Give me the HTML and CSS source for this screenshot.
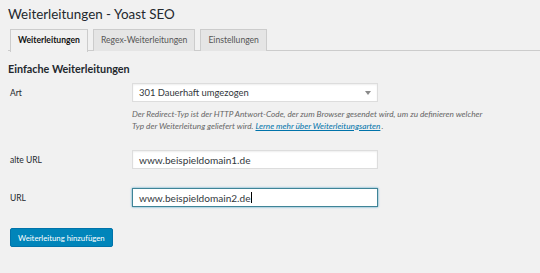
FILE: index.html
```html
<!DOCTYPE html>
<html lang="de">
<head>
  <meta charset="UTF-8" />
  <title>Weiterleitungen - Yoast SEO</title>
  <link rel="stylesheet" href="styles.css">
</head>
<body>
  <div class="wrap">
    <h1>Weiterleitungen - Yoast SEO</h1>

    <nav class="tab-wrapper">
      <a class="tab active">Weiterleitungen</a>
      <a class="tab">Regex-Weiterleitungen</a>
      <a class="tab">Einstellungen</a>
    </nav>

    <h2>Einfache Weiterleitungen</h2>

    <div class="form">
      <div class="row">
        <label>Art</label>
        <div class="field">
          <div class="select">
            <span>301 Dauerhaft umgezogen</span>
            <svg width="6" height="4" viewBox="0 0 6 4"><path d="M0 0h6L3 4z" fill="#8a8a8a"/></svg>
          </div>
          <p class="desc">Der Redirect-Typ ist der HTTP Antwort-Code, der zum Browser gesendet wird, um zu definieren welcher Typ der Weiterleitung geliefert wird. <a href="#">Lerne mehr über Weiterleitungsarten</a>.</p>
        </div>
      </div>

      <div class="row">
        <label>alte URL</label>
        <div class="field">
          <div class="input">www.beispieldomain1.de</div>
        </div>
      </div>

      <div class="row">
        <label>URL</label>
        <div class="field">
          <div class="input focus">www.beispieldomain2.de<span class="caret"></span></div>
        </div>
      </div>
    </div>

    <button class="primary">Weiterleitung hinzufügen</button>
  </div>
</body>
</html>
```

FILE: styles.css
```css
* {
  box-sizing: border-box;
  margin: 0;
  padding: 0;
}

body {
  background: #f1f1f1;
  color: #23282d;
  font-family: Lato, 'Open Sans', sans-serif;
  font-size: 9px;
  overflow: hidden;
}

.wrap {
  padding: 4px 0 0 8px;
}

h1 {
  font-size: 13.4px;
  font-weight: 400;
  line-height: 20px;
  color: #23282d;
}

.tab-wrapper {
  display: flex;
  gap: 5px;
  margin-top: 5px;
  padding-left: 2px;
  border-bottom: 1px solid #ccc;
  height: 22px;
}

.tab {
  height: 22px;
  padding: 0 7px;
  line-height: 21px;
  font-size: 8.6px;
  font-weight: 400;
  color: #555;
  background: #e5e5e5;
  border: 1px solid #ccc;
  border-bottom: none;
}

.tab.active {
  background: #f1f1f1;
  color: #111;
  font-weight: 700;
  height: 23px;
}

h2 {
  margin-top: 10px;
  font-size: 10.8px;
  font-weight: 700;
  line-height: 16px;
}

.form {
  margin-top: 6px;
}

.row {
  display: flex;
  margin-bottom: 18px;
}

.row label {
  width: 124px;
  padding-left: 2px;
  line-height: 20px;
  font-size: 8.5px;
}

.field {
  width: 246px;
}

.select, .input {
  display: flex;
  align-items: center;
  height: 19px;
  padding: 0 6px;
  background: #fff;
  border: 1px solid #ddd;
  box-shadow: inset 0 1px 2px rgba(0, 0, 0, 0.07);
  font-size: 9.4px;
  color: #32373c;
}

.input {
  font-size: 10.1px;
}

.select {
  justify-content: space-between;
}

.input.focus {
  border-color: #3f8497;
  box-shadow: 0 0 2px rgba(30, 140, 190, 0.8);
}

.caret {
  width: 1px;
  height: 11px;
  background: #000;
}

.desc {
  width: 362px;
  margin-top: 7px;
  font-size: 8.25px;
  font-style: italic;
  line-height: 11.5px;
  color: #666;
}

.desc a {
  color: #0073aa;
  padding-right: 1px;
}

.primary {
  margin-top: 2px;
  margin-left: 2px;
  height: 19px;
  padding: 0 7px;
  background: #0085ba;
  border: 1px solid #0073aa;
  border-radius: 2px;
  color: #fff;
  font-family: Lato, 'Open Sans', sans-serif;
  font-size: 7.8px;
}
```
